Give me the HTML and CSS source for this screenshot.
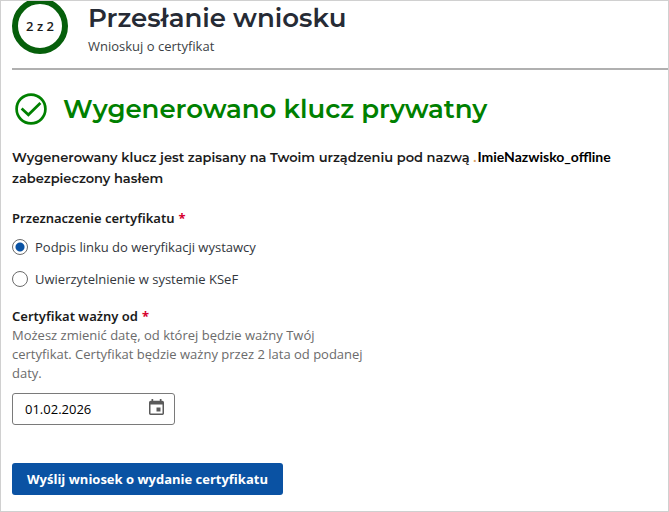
FILE: index.html
```html
<!DOCTYPE html>
<html lang="pl">
<head>
  <meta charset="utf-8">
  <meta name="viewport" content="width=device-width, initial-scale=1">
  <title>Przesłanie wniosku</title>
  <link rel="stylesheet" href="styles.css">
</head>
<body>
  <main class="page">
    <header class="step-header">
      <div class="step-circle">2 z 2</div>
      <div class="step-text">
        <h1>Przesłanie wniosku</h1>
        <p>Wnioskuj o certyfikat</p>
      </div>
    </header>

    <div class="success">
      <svg class="success-icon" viewBox="0 0 32 32" aria-hidden="true">
        <circle cx="16" cy="16" r="14.4"/>
        <path d="M6.6 15.4 L13.4 21.8 L25.4 10"/>
      </svg>
      <h2>Wygenerowano klucz prywatny</h2>
    </div>

    <p class="key-info">
      Wygenerowany klucz jest zapisany na Twoim urządzeniu pod nazwą <span class="dot">.</span><span class="file-name">ImieNazwisko_offline</span><br>
      zabezpieczony hasłem
    </p>

    <form>
      <fieldset class="purpose">
        <legend>Przeznaczenie certyfikatu<span class="required">*</span></legend>
        <label class="radio">
          <input type="radio" name="purpose" value="offline" checked>
          Podpis linku do weryfikacji wystawcy
        </label>
        <label class="radio">
          <input type="radio" name="purpose" value="auth">
          Uwierzytelnienie w systemie KSeF
        </label>
      </fieldset>

      <div class="field">
        <label for="validFrom">Certyfikat ważny od<span class="required">*</span></label>
        <p class="hint" id="validFromHint">Możesz zmienić datę, od której będzie ważny Twój certyfikat. Certyfikat będzie ważny przez 2 lata od podanej daty.</p>
        <div class="date-box">
          <input type="text" id="validFrom" value="01.02.2026" aria-describedby="validFromHint">
          <button type="button" class="calendar" aria-label="Wybierz datę">
            <svg viewBox="0 0 15 17" aria-hidden="true">
              <path fill-rule="evenodd" d="M2.500 0h1.700v1.700h6.600V0h1.700v1.700h.8a1.700 1.700 0 0 1 1.700 1.700v11.200a1.500 1.500 0 0 1-1.500 1.400H1.500A1.500 1.500 0 0 1 0 14.600V3.400a1.700 1.700 0 0 1 1.700-1.700h.8zM1.500 5.500v9h12v-9z"/>
              <path d="M7.500 8.500h4v4h-4z"/>
            </svg>
          </button>
        </div>
      </div>

      <button type="submit" class="submit">Wyślij wniosek o wydanie certyfikatu</button>
    </form>
  </main>
</body>
</html>
```

FILE: styles.css
```css
* {
  margin: 0;
  padding: 0;
  box-sizing: border-box;
}

body {
  font-family: "Open Sans", "Noto Sans", sans-serif;
  font-size: 13px;
  line-height: 19px;
  color: #1b1b1b;
  background: #fff;
}

.page {
  min-height: 100vh;
  padding-left: 11px;
  border: 1px solid #d0d0d0;
  overflow: hidden;
}

h1,
h2,
.key-info {
  font-family: Montserrat, Inter, sans-serif;
  font-weight: 600;
}

.step-header {
  display: flex;
  align-items: flex-start;
  gap: 20px;
  height: 69px;
  border-bottom: 2px solid #b0b0b0;
}

.step-circle {
  display: flex;
  align-items: center;
  justify-content: center;
  width: 56px;
  height: 56px;
  margin-top: -3px;
  border: 6px solid #065f0b;
  border-radius: 50%;
  font-weight: 600;
}

h1 {
  font-size: 26px;
  line-height: 34px;
  color: #262b35;
}

.step-text p {
  margin-top: 2px;
  color: #3c3f45;
}

.success {
  display: flex;
  align-items: center;
  gap: 16px;
  margin: 22px 0 0 3px;
}

.success-icon {
  width: 32px;
  height: 32px;
  fill: none;
  stroke: #008000;
  stroke-width: 2.7;
}

h2 {
  font-size: 26px;
  line-height: 34px;
  color: #008000;
}

.key-info {
  margin-top: 20px;
  line-height: 21px;
}

.dot {
  color: #d9a066;
}

.file-name {
  margin-left: 1px;
  font-family: Lato, sans-serif;
  font-weight: 700;
  font-size: 14px;
  color: #000;
}

.purpose {
  margin-top: 20px;
  border: 0;
}

legend,
.field label {
  font-family: "Noto Sans", sans-serif;
  font-weight: 600;
}

.required {
  margin-left: 4px;
  font-weight: 700;
  color: #d6002f;
}

.radio {
  display: flex;
  align-items: center;
  gap: 7px;
  height: 16px;
  margin-top: 16px;
  color: #33373d;
}

legend + .radio {
  margin-top: 11px;
}

.radio input {
  appearance: none;
  width: 16px;
  height: 16px;
  border: 1px solid #6b6b6b;
  border-radius: 50%;
}

.radio input:checked {
  background: radial-gradient(circle, #0a52a3 4px, #fff 5px);
}

.field {
  margin-top: 20px;
}

.hint {
  max-width: 360px;
  color: #6b6b6b;
}

.date-box {
  display: flex;
  align-items: center;
  width: 163px;
  height: 32px;
  margin-top: 10px;
  padding: 0 10px 0 12px;
  border: 1px solid #7a7a7a;
  border-radius: 3px;
}

.date-box input {
  flex: 1;
  min-width: 0;
  border: 0;
  outline: 0;
  font: inherit;
  color: #000;
}

.calendar {
  display: flex;
  margin-bottom: 3px;
  border: 0;
  background: none;
  cursor: pointer;
}

.calendar svg {
  width: 15px;
  height: 17px;
  fill: #5a5a5a;
}

.submit {
  height: 32px;
  margin-top: 38px;
  padding: 0 15px;
  border: 0;
  border-radius: 3px;
  font: inherit;
  font-weight: 700;
  color: #fff;
  background: #0a52a3;
  cursor: pointer;
}
```
